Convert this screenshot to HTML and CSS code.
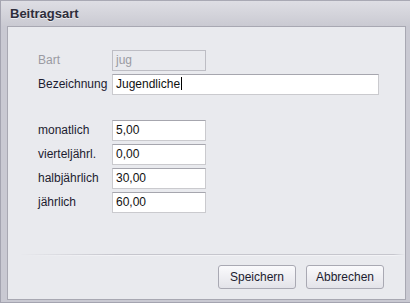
FILE: index.html
```html
<!DOCTYPE html>
<html lang="de">
  <head>
    <meta charset="UTF-8" />
    <title>Beitragsart</title>
    <link rel="stylesheet" href="styles.css">
  </head>
  <body>
    <div class="window">
      <div class="titlebar">Beitragsart</div>
      <div class="panel">
        <div class="form">
          <label class="disabled">Bart</label>
          <div class="field short disabled">jug</div>

          <label>Bezeichnung</label>
          <div class="field long">Jugendliche<i class="caret"></i></div>

          <div class="spacer"></div>

          <label>monatlich</label>
          <div class="field short">5,00</div>

          <label>vierteljährl.</label>
          <div class="field short">0,00</div>

          <label>halbjährlich</label>
          <div class="field short">30,00</div>

          <label>jährlich</label>
          <div class="field short">60,00</div>
        </div>

        <div class="footer">
          <div class="separator"></div>
          <div class="buttons">
            <button>Speichern</button>
            <button>Abbrechen</button>
          </div>
        </div>
      </div>
    </div>
  </body>
</html>
```

FILE: styles.css
```css
* {
  box-sizing: border-box;
  margin: 0;
  padding: 0;
}

body {
  font-family: "Liberation Sans", Arial, sans-serif;
  font-size: 12px;
  color: #1c1c30;
  background: #c9c9d2;
}

.window {
  width: 410px;
  height: 303px;
  display: flex;
  flex-direction: column;
  background: #c9c9d2;
  border-top: 1px solid #a9a9b4;
  border-left: 1px solid #a4a4b0;
  border-bottom: 1px solid #a4a4b0;
}

.titlebar {
  height: 25px;
  line-height: 25px;
  padding-left: 9px;
  font-size: 13px;
  font-weight: bold;
  color: #2e2e3c;
  text-shadow: 0 1px 0 rgba(255, 255, 255, 0.6);
  background: linear-gradient(#dedee4, #cacad2);
}

.panel {
  flex: 1;
  display: flex;
  flex-direction: column;
  margin: 0 4px 2px 6px;
  border: 1px solid #a8a8b2;
  background: #e9eaee;
}

.form {
  display: grid;
  grid-template-columns: 74px auto;
  row-gap: 3px;
  align-items: center;
  padding: 23px 0 0 30px;
}

.form label {
  line-height: 21px;
}

.form label.disabled {
  color: #9a9aa2;
}

.spacer {
  grid-column: 1 / 3;
  height: 19px;
}

.field {
  height: 21px;
  line-height: 19px;
  padding-left: 3px;
  background: #fff;
  color: #111;
  border: 1px solid #cacace;
  border-top-color: #a6a6ae;
  white-space: nowrap;
}

.field.short {
  width: 94px;
}

.field.long {
  width: 267px;
}

.field.disabled {
  background: #e9eaee;
  color: #9a9aa2;
  border-color: #bdbdc4;
}

.caret {
  display: inline-block;
  width: 1px;
  height: 13px;
  margin-left: 1px;
  vertical-align: -2px;
  background: #000;
}

.footer {
  margin-top: auto;
  padding-bottom: 10px;
}

.separator {
  height: 2px;
  margin-left: 12px;
  border-top: 1px solid #c6c6cd;
  border-bottom: 1px solid #f3f3f6;
  -webkit-mask-image: linear-gradient(90deg, transparent, #000 25%, #000 97%, transparent);
  mask-image: linear-gradient(90deg, transparent, #000 25%, #000 97%, transparent);
}

.buttons {
  display: flex;
  justify-content: flex-end;
  gap: 10px;
  padding: 9px 21px 0 0;
}

.buttons button {
  width: 78px;
  height: 24px;
  font-family: "Liberation Sans", Arial, sans-serif;
  font-size: 12px;
  color: #1c1c30;
  border: 1px solid #a9a9b3;
  border-radius: 3px;
  background: linear-gradient(#fafafc, #e3e3e9);
}
```
